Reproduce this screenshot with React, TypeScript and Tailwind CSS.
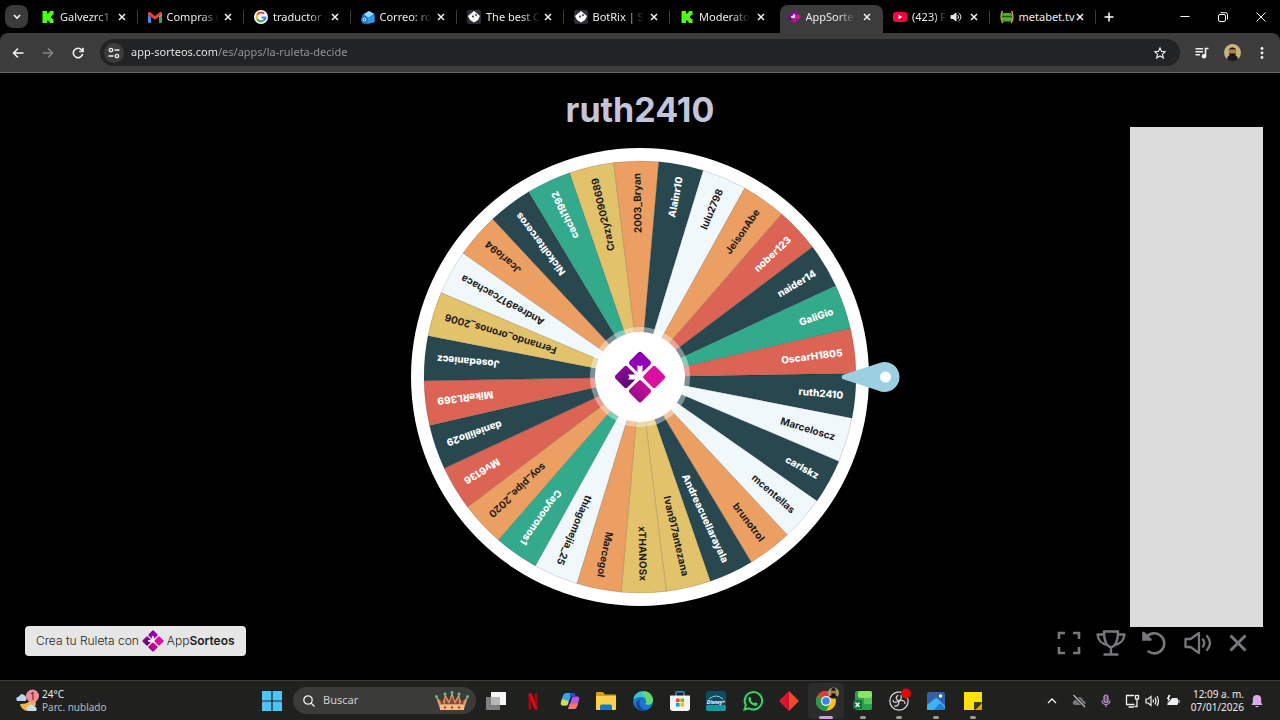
import { useId, type ReactNode } from "react"
import { clsx } from "clsx"

const TEAL = "#28474f"
const GREEN = "#34aa8d"
const SAND = "#e3c26c"
const ORANGE = "#ec9f63"
const CORAL = "#dc6454"
const ICE = "#f0f8fc"

const entries = [
  { name: "ruth2410", color: TEAL },
  { name: "Marceloscz", color: ICE },
  { name: "carlskz", color: TEAL },
  { name: "mcentellas", color: ICE },
  { name: "brunotrol", color: ORANGE },
  { name: "Andreacuellarayala", color: TEAL },
  { name: "Ivan917antezana", color: SAND },
  { name: "xTHANOSx", color: SAND },
  { name: "Marcegol", color: ORANGE },
  { name: "thiagomejia_25", color: ICE },
  { name: "Cayooronos1", color: GREEN },
  { name: "soy_pipe_2020", color: ORANGE },
  { name: "Mv6136", color: CORAL },
  { name: "danielillo29", color: TEAL },
  { name: "MikeRL369", color: CORAL },
  { name: "Josedaniecz", color: TEAL },
  { name: "Fernando_oronos_2006", color: SAND },
  { name: "Andrea917cachaca", color: ICE },
  { name: "Jcarlo94", color: ORANGE },
  { name: "Nickollterceros", color: TEAL },
  { name: "cachi1992", color: GREEN },
  { name: "Crazy2090689", color: SAND },
  { name: "2003_Bryan", color: ORANGE },
  { name: "Alainr10", color: TEAL },
  { name: "lulu2798", color: ICE },
  { name: "JeisonAbe", color: ORANGE },
  { name: "nober123", color: CORAL },
  { name: "naider14", color: TEAL },
  { name: "GaliGio", color: GREEN },
  { name: "OscarH1805", color: CORAL },
]

const START = -1
const STEP = 360 / entries.length
const RADIUS = 216

function slicePath(index: number) {
  const point = (deg: number) => {
    const rad = (deg * Math.PI) / 180
    return `${(RADIUS * Math.cos(rad)).toFixed(2)} ${(RADIUS * Math.sin(rad)).toFixed(2)}`
  }
  const from = START + index * STEP
  return `M0 0L${point(from)}A${RADIUS} ${RADIUS} 0 0 1 ${point(from + STEP)}Z`
}

function LogoShape() {
  const id = useId()
  return (
    <g>
      <defs>
        <linearGradient id={`${id}t`} x1="0" y1="0" x2="1" y2="1">
          <stop offset="0" stopColor="#7c00a8" />
          <stop offset="1" stopColor="#ac00c8" />
        </linearGradient>
        <linearGradient id={`${id}l`} x1="0" y1="0" x2="1" y2="0">
          <stop offset="0" stopColor="#8a0a96" />
          <stop offset="1" stopColor="#560a6c" />
        </linearGradient>
        <linearGradient id={`${id}b`} x1="0" y1="0" x2="0" y2="1">
          <stop offset="0" stopColor="#c4109c" />
          <stop offset="1" stopColor="#9c0a8a" />
        </linearGradient>
      </defs>
      <g transform="rotate(45)">
        <rect x="-18.500" y="-18.500" width="17" height="17" rx="2.500" fill={`url(#${id}t)`} />
        <rect x="-18.500" y="1.500" width="17" height="17" rx="2.500" fill={`url(#${id}l)`} />
        <rect x="1.500" y="-18.500" width="17" height="17" rx="2.500" fill="#dc10a0" />
        <rect x="1.500" y="1.500" width="17" height="17" rx="2.500" fill={`url(#${id}b)`} />
      </g>
      <path d="M-2.500-12L0-10.500L2.500-12V-2H-2.500ZM-12-2.500L-10.500 0L-12 2.500H-2V-2.500Z" fill="#fff" />
      <path d="M-5-5L5 5M5-5L-5 5" stroke="#fff" strokeWidth="3" />
    </g>
  )
}

function Logo({ className }: { className: string }) {
  return (
    <svg viewBox="-26 -26 52 52" className={className} aria-hidden="true">
      <LogoShape />
    </svg>
  )
}

function Wheel() {
  return (
    <svg viewBox="-229 -229 458 458" className="size-[458px] overflow-visible">
      <circle r="229" fill="#fff" />
      {entries.map((entry, i) => (
        <path key={entry.name} d={slicePath(i)} fill={entry.color} stroke="#00000055" strokeWidth="0.4" />
      ))}
      {entries.map((entry, i) => {
        const light = entry.color === TEAL || entry.color === GREEN || entry.color === CORAL
        return (
          <text
            key={entry.name}
            transform={`rotate(${START + (i + 0.5) * STEP})`}
            x="204"
            y="4"
            textAnchor="end"
            className={clsx("text-[10px]", light ? "fill-white font-extrabold" : "fill-[#1c1c1c] font-bold")}
          >
            {entry.name}
          </text>
        )
      })}
      <circle r="50" fill="#fff" fillOpacity="0.4" />
      <circle r="45" fill="#fff" />
      <LogoShape />
      <path d="M202 0C201-1.500 203-2 204-2.500L238-13.500A15 15 0 1 1 238 13.500L204 2.500C203 2 201 1.500 202 0Z" fill="#9ccfe2" />
      <circle cx="245.500" r="5.500" fill="#fff" />
    </svg>
  )
}

function KickIcon() {
  return (
    <svg viewBox="0 0 12 12" className="ml-px size-3 shrink-0">
      <path d="M0.500 0H5V2.500H6.500V1.200H7.800V0H11.500V4H10V5H9V7H10V8H11.500V12H7.800V10.800H6.500V9.500H5V12H0.500Z" fill="#4dfa18" />
    </svg>
  )
}

function GmailIcon() {
  return (
    <svg viewBox="0 0 14 11" className="h-[11px] w-3.5 shrink-0">
      <path d="M0 2V10a1 1 0 0 0 1 1H3V4Z" fill="#4285f4" />
      <path d="M14 2V10a1 1 0 0 1-1 1H11V4Z" fill="#34a853" />
      <path d="M0 1.500V3L3 5.500V2Z" fill="#c5221f" />
      <path d="M14 1.500V3L11 5.500V2Z" fill="#fbbc04" />
      <path d="M0 2C0 0 1.500-0.300 2.500 0.500L7 4L11.500 0.500C12.500-0.300 14 0 14 2L11 4.800L7 7.800L3 4.800Z" fill="#ea4335" />
    </svg>
  )
}

function GoogleIcon() {
  return (
    <svg viewBox="-8 -8 16 16" className="size-3.5 shrink-0">
      <circle r="8" fill="#fff" />
      <g fill="none" strokeWidth="2.400">
        <path d="M3.600-3.600A5 5 0 0 0-4.300-2.600" stroke="#ea4335" />
        <path d="M-4.300-2.600A5 5 0 0 0-4.300 2.600" stroke="#fbbc04" />
        <path d="M-4.300 2.600A5 5 0 0 0 3 4" stroke="#34a853" />
        <path d="M3 4A5 5 0 0 0 5 0.500H0.500" stroke="#4285f4" />
      </g>
    </svg>
  )
}

function MailIcon() {
  return (
    <svg viewBox="0 0 14 14" className="size-3.5 shrink-0">
      <path d="M1 5L8 1L13.500 4V12L8 13.500H1Z" fill="#1272d0" />
      <path d="M3 4L8 1L13 4L7 8Z" fill="#8fdcff" />
      <path d="M7 8L13.500 5V12L8 13.500H3Z" fill="#2f9bf0" />
      <circle cx="3.500" cy="9.500" r="3.500" fill="#1b6fcf" />
      <circle cx="3.500" cy="9.500" r="1.500" fill="none" stroke="#fff" />
    </svg>
  )
}

function BotrixIcon() {
  return (
    <svg viewBox="0 0 14 14" className="size-3.5 shrink-0">
      <rect width="14" height="14" rx="2" fill="#2c2d38" />
      <path d="M7 1L13 6L11 10L7 12.500L3 10L1 6Z" fill="#fff" />
      <path d="M5 6.500L6 5L7 6.500L6 8ZM8 5L9 3.800L10 5L9 6.500Z" fill="#222" />
    </svg>
  )
}

function YoutubeIcon() {
  return (
    <svg viewBox="0 0 14 10" className="h-2.5 w-3.5 shrink-0">
      <rect width="14" height="10" rx="2.500" fill="#f4023c" />
      <path d="M5.500 2.800L9.200 5L5.500 7.200Z" fill="#fff" />
    </svg>
  )
}

function MetabetIcon() {
  return (
    <svg viewBox="0 0 14 14" className="size-3.5 shrink-0">
      <path d="M2.500 1C0.500 4 0.500 10 3 13M11.500 1C13.500 4 13.500 10 11 13" stroke="#c9a13c" strokeWidth="1.500" fill="none" />
      <rect x="2" y="3" width="10" height="8.500" rx="2" fill="#58ac30" />
      <path d="M2 6.500H12" stroke="#1d5a12" strokeWidth="1.500" />
    </svg>
  )
}

function CloseGlyph({ className = "size-2" }: { className?: string }) {
  return (
    <svg viewBox="0 0 8 8" className={className}>
      <path d="M1 1L7 7M7 1L1 7" stroke="currentColor" strokeWidth="1.500" />
    </svg>
  )
}

const tabs: { title: string; icon: ReactNode; active?: boolean; audio?: boolean }[] = [
  { title: "Galvezrc1 :", icon: <KickIcon /> },
  { title: "Compras (", icon: <GmailIcon /> },
  { title: "traductor i", icon: <GoogleIcon /> },
  { title: "Correo: ro", icon: <MailIcon /> },
  { title: "The best C", icon: <BotrixIcon /> },
  { title: "BotRix | S", icon: <BotrixIcon /> },
  { title: "Moderato", icon: <KickIcon /> },
  { title: "AppSorte", icon: <Logo className="size-3.5 shrink-0" />, active: true },
  { title: "(423) F", icon: <YoutubeIcon />, audio: true },
  { title: "metabet.tv", icon: <MetabetIcon /> },
]

function TabStrip() {
  return (
    <div className="flex h-[33px] items-stretch bg-black">
      <div className="flex w-[31px] items-center pl-[5px]">
        <button aria-label="Buscar pestañas" className="flex size-[23px] items-center justify-center rounded-lg bg-[#3a3a3a]">
          <svg viewBox="0 0 8 6" className="h-1.5 w-2">
            <path d="M1 1L4 4.200L7 1" stroke="#fff" strokeWidth="1.600" fill="none" />
          </svg>
        </button>
      </div>
      <div className="flex min-w-0 flex-1">
        {tabs.map((tab, i) => (
          <div key={i} className="relative flex min-w-0 flex-1 items-end">
            <div
              className={clsx(
                "flex h-7 min-w-0 flex-1 items-center pr-3 pb-1 pl-2.5",
                tab.active && "ml-[3px] rounded-t-lg bg-[#3c3c3c] pl-[7px]",
              )}
            >
              <button className="flex min-w-0 flex-1 items-center text-left">
                <span className="flex w-[19px] shrink-0">{tab.icon}</span>
                <span
                  className={clsx(
                    "flex-1 text-[11px] leading-4 whitespace-nowrap text-[#ececec]",
                    i < 9 && "[mask-image:linear-gradient(to_right,black_65%,transparent)]",
                  )}
                >
                  {tab.title}
                </span>
                {tab.audio && (
                  <svg viewBox="0 0 12 12" className="mx-1 size-3 shrink-0" fill="none" stroke="#e6e6e6">
                    <path d="M1 4.500H3L6 2V10L3 7.500H1Z" fill="#e6e6e6" />
                    <path d="M7.500 4A2.500 2.500 0 0 1 7.500 8M8.500 2A4.500 4.500 0 0 1 8.500 10" />
                  </svg>
                )}
              </button>
              <button aria-label="Cerrar pestaña" className={clsx("text-[#f2f2f2]", i < 9 ? "ml-2" : "ml-1")}>
                <CloseGlyph />
              </button>
            </div>
            {!tab.active && i !== 6 && <span className="absolute top-2.5 right-0 h-3.5 w-px bg-[#3a3a3a]" />}
          </div>
        ))}
      </div>
      <button aria-label="Nueva pestaña" className="flex w-[26px] items-center justify-center text-white">
        <svg viewBox="0 0 10 10" className="size-2.5">
          <path d="M5 0.500V9.500M0.500 5H9.500" stroke="currentColor" strokeWidth="1.500" />
        </svg>
      </button>
      <div className="ml-11 flex items-stretch text-white">
        <button aria-label="Minimizar" className="flex w-[38px] items-center justify-center">
          <svg viewBox="0 0 10 10" className="size-2.5">
            <path d="M0.500 4.500H9.500" stroke="currentColor" />
          </svg>
        </button>
        <button aria-label="Restaurar" className="flex w-[38px] items-center justify-center">
          <svg viewBox="0 0 10 10" className="size-2.5" fill="none" stroke="currentColor">
            <rect x="0.500" y="2.500" width="7" height="7" rx="1.500" />
            <path d="M2.500 0.700H7.500A2 2 0 0 1 9.500 2.700V7.500" />
          </svg>
        </button>
        <button aria-label="Cerrar" className="flex w-[38px] items-center justify-center">
          <svg viewBox="0 0 10 10" className="size-2.5">
            <path d="M0.500 0.500L9.500 9.500M9.500 0.500L0.500 9.500" stroke="currentColor" />
          </svg>
        </button>
      </div>
    </div>
  )
}

function Avatar({ className }: { className: string }) {
  return (
    <svg viewBox="0 0 16 16" className={className}>
      <circle cx="8" cy="8" r="8" fill="#c5b578" />
      <path d="M3 14.500C3 11 5 10 8 10S13 11 13 14.500A8 8 0 0 1 3 14.500Z" fill="#1e1a1c" />
      <ellipse cx="8" cy="7.500" rx="3.200" ry="4" fill="#b07a55" />
      <path d="M4.500 7C4 2 12 2 11.500 7L10.500 5H5.500ZM4.800 8.500L6 9H10L11.200 8.500C11 13 5 13 4.800 8.500Z" fill="#17110e" />
    </svg>
  )
}

function AddressBar() {
  return (
    <div className="flex h-10 items-center rounded-t-lg border-b border-[#6a6a6a] bg-[#3c3c3c] text-[#e8e8e8]">
      <div className="flex w-[100px] items-center pl-[3px]">
        <button aria-label="Atrás" className="flex w-[30px] justify-center">
          <svg viewBox="0 0 12 12" className="size-3" fill="none" stroke="#f4f4f4" strokeWidth="1.500">
            <path d="M11.500 6H1.500M6 1.500L1.500 6L6 10.500" />
          </svg>
        </button>
        <button aria-label="Adelante" className="flex w-[30px] justify-center">
          <svg viewBox="0 0 12 12" className="size-3" fill="none" stroke="#858585" strokeWidth="1.500">
            <path d="M0.500 6H10.500M6 1.500L10.500 6L6 10.500" />
          </svg>
        </button>
        <button aria-label="Recargar" className="flex w-[30px] justify-center">
          <svg viewBox="0 0 12 12" className="size-3" fill="none" stroke="#f4f4f4" strokeWidth="1.600">
            <path d="M10.600 7A4.700 4.700 0 1 1 9.500 2.800L10.800 4.200M11 0.800V4.500H7.200" />
          </svg>
        </button>
      </div>
      <div className="flex h-[27px] flex-1 items-center rounded-full bg-[#212325] pr-3.5 pl-1">
        <button aria-label="Información del sitio" className="flex size-5 items-center justify-center rounded-full bg-[#3c3c3c]">
          <svg viewBox="0 0 12 12" className="size-3" fill="none" stroke="#f0f0f0" strokeWidth="1.300">
            <circle cx="3" cy="3" r="1.700" />
            <circle cx="9" cy="9" r="1.700" />
            <path d="M6.500 3H11.500M0.500 9H5.500" />
          </svg>
        </button>
        <input
          aria-label="Dirección"
          defaultValue="app-sorteos.com/es/apps/la-ruleta-decide"
          className="ml-[7px] min-w-0 flex-1 bg-[linear-gradient(to_right,#f4f4f4_86px,#96989a_86px)] bg-clip-text text-[11px] text-transparent outline-none"
        />
        <button aria-label="Añadir a marcadores">
          <svg viewBox="0 0 14 14" className="size-3" fill="none" stroke="#f0f0f0" strokeWidth="1.300">
            <path d="M7 1L8.800 5.100L13.200 5.500L9.900 8.400L10.900 12.800L7 10.500L3.100 12.800L4.100 8.400L0.800 5.500L5.200 5.100Z" />
          </svg>
        </button>
      </div>
      <div className="flex w-[100px] items-center pl-[7px]">
        <button aria-label="Controles multimedia" className="flex w-[30px] justify-center">
          <svg viewBox="0 0 14 12" className="h-3 w-3.5" fill="none" stroke="#f0f0f0" strokeWidth="1.600">
            <path d="M0.500 1.800H8M0.500 4.800H8M0.500 7.800H5M10.500 9.300V1.500H13.500" />
            <circle cx="9" cy="9.300" r="1.500" fill="#f0f0f0" />
          </svg>
        </button>
        <button aria-label="Perfil" className="flex w-[30px] justify-center">
          <Avatar className="size-[17px]" />
        </button>
        <button aria-label="Menú" className="flex w-[30px] justify-center">
          <svg viewBox="0 0 4 14" className="h-3.5 w-1" fill="#f0f0f0">
            <circle cx="2" cy="2.500" r="1.400" />
            <circle cx="2" cy="7" r="1.400" />
            <circle cx="2" cy="11.500" r="1.400" />
          </svg>
        </button>
      </div>
    </div>
  )
}

function WheelControls() {
  return (
    <div className="flex h-[53px] items-start pt-0.5 pr-[7px] text-[#77787c] [&_svg]:fill-none [&_svg]:stroke-current">
      <button aria-label="Pantalla completa" className="flex h-7 w-[42px] items-center justify-center">
        <svg viewBox="0 0 24 24" className="size-6" strokeWidth="2.600">
          <path d="M2 8V2H8M16 2H22V8M22 16V22H16M8 22H2V16" />
        </svg>
      </button>
      <button aria-label="Ganadores" className="flex h-7 w-[42px] items-center justify-center">
        <svg viewBox="0 0 30 26" className="h-[26px] w-[30px]" strokeWidth="2.400">
          <path d="M8 1.500H22C22 10 19.500 16 15 17.500C10.500 16 8 10 8 1.500ZM8 4.500H1.500C2 10 6 14 11.500 15M22 4.500H28.500C28 10 24 14 18.500 15M15 17.500V24.500M8.500 24.500H21.500" strokeLinejoin="round" strokeLinecap="round" />
        </svg>
      </button>
      <button aria-label="Reiniciar" className="flex h-7 w-11 items-center justify-center">
        <svg viewBox="0 0 24 24" className="size-6" strokeWidth="2.600">
          <path d="M1.500 2V8.500H8.500M2 8L4 5.500M4.500 6A10 10 0 1 1 6.500 20.500M1.500 2L8 8.500" strokeLinecap="round" />
        </svg>
      </button>
      <button aria-label="Sonido" className="flex h-7 w-11 items-center justify-center">
        <svg viewBox="0 0 28 24" className="h-6 w-7" strokeWidth="2.300" strokeLinejoin="round" strokeLinecap="round">
          <path d="M1.500 8H6.500L15 2V22L6.500 16H1.500ZM19 8.500Q21.500 12 19 15.500M23 5Q29 12 23 19" />
        </svg>
      </button>
      <button aria-label="Salir" className="flex h-7 w-9 items-center justify-center">
        <svg viewBox="0 0 18 18" className="size-[18px]" strokeWidth="3">
          <path d="M1.500 1.500L16.500 16.500M16.500 1.500L1.500 16.500" />
        </svg>
      </button>
    </div>
  )
}

const apps: { label: string; icon: ReactNode; running?: boolean }[] = [
  {
    label: "Vista de tareas",
    icon: (
      <>
        <rect x="5" y="1" width="15" height="13" fill="#f6f6f6" />
        <rect x="0" y="6" width="14" height="13" fill="#8a8a8a" fillOpacity="0.9" />
        <rect x="5" y="6" width="9" height="8" fill="#b8b8b8" />
      </>
    ),
  },
  {
    label: "Netflix",
    icon: (
      <>
        <path d="M5.500 2.500H8.500V18L5.500 18.400ZM11.500 2.500H14.500V18.400L11.500 18Z" fill="#a80710" />
        <path d="M5.500 2.500H8.500L14.500 18.400L11.500 18Z" fill="#e50914" />
      </>
    ),
  },
  {
    label: "Copilot",
    icon: (
      <>
        <path d="M6 2H12L8 13Q7.500 14.500 5.500 14.500H3Q0 14.500 1 11L3 4.500Q4 2 6 2Z" fill="#35a6e8" />
        <path d="M1 11L2 8L8.500 10L8 13Q7.500 14.500 5.500 14.500H3Q0 14.500 1 11Z" fill="#d9d94a" />
        <path d="M14 18H8L12 7Q12.500 5.500 14.500 5.500H17Q20 5.500 19 9L17 15.500Q16 18 14 18Z" fill="#b65ae0" />
        <path d="M14 18H8L10 12.500H18L17 15.500Q16 18 14 18Z" fill="#f4756b" />
        <path d="M10 2H13.500Q15 2 15.500 4L16 5.500H12.500Q11 5.500 10 8Z" fill="#1c56d0" />
      </>
    ),
  },
  {
    label: "Explorador",
    icon: (
      <>
        <path d="M0 2Q0 1 1 1H7L9 3.500H19Q20 3.500 20 4.500V10H0Z" fill="#d99c14" />
        <rect y="5" width="20" height="14" rx="1" fill="#fbd04b" />
        <path d="M4 19V15Q4 13.500 5.500 13.500H14.500Q16 13.500 16 15V19Z" fill="#1976c8" />
      </>
    ),
  },
  {
    label: "Edge",
    icon: (
      <>
        <circle cx="10" cy="10" r="10" fill="#1a76cc" />
        <path d="M0.500 9C1-2 18-3 20 9C20.500 13 15 15 12.500 13C14 11 13 6 8.500 6C4 6 1 8 0.500 9Z" fill="#3fc0d0" />
        <path d="M12 0.300C17 1 20 5 20 9C20 13 15 15 12.500 13C15 9 12 4 8 3Z" fill="#66d66a" />
        <path d="M7 9C5 13 8 19 14 18.500Q10 21 5.500 18.500C1 14 3 9 8.500 8Z" fill="#124a98" />
      </>
    ),
  },
  {
    label: "Microsoft Store",
    icon: (
      <>
        <path d="M6 5V1.500Q6 0.700 7 0.700H13Q14 0.700 14 1.500V5" fill="none" stroke="#2a93d8" strokeWidth="1.500" />
        <path d="M0 4.500H20V17Q20 20 17 20H3Q0 20 0 17Z" fill="#f4f4f4" />
        <rect x="6" y="7.500" width="3.600" height="3.600" fill="#f25022" />
        <rect x="10.500" y="7.500" width="3.600" height="3.600" fill="#7fba00" />
        <rect x="6" y="12" width="3.600" height="3.600" fill="#00a4ef" />
        <rect x="10.500" y="12" width="3.600" height="3.600" fill="#ffb900" />
      </>
    ),
  },
  {
    label: "Disney+",
    icon: (
      <>
        <rect width="20" height="20" rx="2" fill="#0b4c62" />
        <rect y="14" width="20" height="6" rx="2" fill="#149a9e" />
        <path d="M3 8Q10 2 17 8" stroke="#bfeaf0" strokeWidth="0.800" fill="none" />
        <text x="10" y="13" textAnchor="middle" className="fill-white text-[5px] font-bold italic">
          Disney+
        </text>
      </>
    ),
  },
  {
    label: "WhatsApp",
    icon: (
      <>
        <path d="M1.500 18.500L2.800 14A8.700 8.700 0 1 1 6 17.300Z" fill="none" stroke="#35d466" strokeWidth="2" />
        <path d="M7 5.500L8.500 8.300L7.800 9.500Q9 11.500 11 12.300L12.200 11.300L14.800 12.600Q14.500 15 12.300 14.900Q6.500 14 5.300 8.300Q5.300 6 7 5.500Z" fill="#35d466" />
      </>
    ),
  },
  {
    label: "Rombo",
    icon: (
      <>
        <path d="M10 0L0 10L10 20Z" fill="#e8142c" />
        <path d="M10 0L20 10L10 20Z" fill="#f0482a" />
        <path d="M10 0L5 10L10 20Z" fill="#d01230" />
      </>
    ),
  },
  {
    label: "Chrome",
    running: true,
    icon: (
      <>
        <circle cx="10" cy="10" r="10" fill="#fbc116" />
        <path d="M10 10L1.300 5A10 10 0 0 1 18.700 5Z" fill="#e33b2e" />
        <path d="M10 10L1.300 5A10 10 0 0 0 10 20L14.300 12.500Z" fill="#229a48" />
        <circle cx="10" cy="10" r="5" fill="#fff" />
        <circle cx="10" cy="10" r="3.800" fill="#3b82ec" />
        <circle cx="17.500" cy="2" r="5.500" fill="#a89a72" />
        <path d="M13.500 6Q14 4 17.500 4T21.500 6Q17.500 9 13.500 6Z" fill="#1e1a1c" />
        <ellipse cx="17.500" cy="1.500" rx="2.300" ry="3" fill="#a8754f" />
        <path d="M15 1Q15-3 17.500-3T20 1L19.500-0.500H15.500ZM15.200 2.500H19.800Q19.500 5.500 17.500 5.500T15.200 2.500Z" fill="#17110e" />
      </>
    ),
  },
  {
    label: "Excel",
    running: true,
    icon: (
      <>
        <rect x="2" width="17" height="19" rx="2" fill="#2ba04c" />
        <rect x="5" width="14" height="7" rx="2" fill="#8be26a" />
        <rect x="11" y="7" width="8" height="6" fill="#52c45a" />
        <rect y="9" width="9" height="9" rx="1.500" fill="#0f703b" />
        <path d="M2.500 11.500L6.500 16M6.500 11.500L2.500 16" stroke="#fff" strokeWidth="1.300" />
      </>
    ),
  },
  {
    label: "OBS Studio",
    running: true,
    icon: (
      <>
        <circle cx="10" cy="10" r="9.200" fill="#242426" stroke="#d8d8d8" strokeWidth="1.200" />
        <path d="M9 4Q5 8 10 10Q16 8 16 13M10 10Q10 16 5 15M4 9Q4 13 10 10M12 4Q13 8 10 10" fill="none" stroke="#d8d8d8" strokeWidth="1.200" />
        <circle cx="17" cy="2.500" r="5" fill="#e00808" />
      </>
    ),
  },
  {
    label: "Fotos",
    running: true,
    icon: (
      <>
        <rect x="1" y="1" width="18" height="18" rx="2" fill="#3360a8" />
        <path d="M1 14L9 7.500Q10.500 6.500 12 8L19 15V17Q19 19 17 19H1Z" fill="#3fb4ec" />
        <path d="M8 19L13 13Q14 12 15.500 13.500L19 17Q19 19 17 19Z" fill="#1c82d0" />
        <circle cx="14.500" cy="5" r="1.700" fill="#fff" />
      </>
    ),
  },
  {
    label: "Notas rápidas",
    running: true,
    icon: (
      <>
        <path d="M1 1H19V12H12V19H1Z" fill="#fbe00a" />
        <path d="M11 11H19L11 19Z" fill="#3d3b28" />
        <path d="M19 12V19H12Z" fill="#d8a708" />
      </>
    ),
  },
]

function Taskbar() {
  return (
    <div className="flex h-10 items-center border-t border-[#3d3d3d] bg-[#20201f] text-[#ececec]">
      <button className="flex w-[251px] items-center pl-4 text-left">
        <svg viewBox="0 0 23 24" className="h-6 w-[23px]">
          <path d="M4 15A8 8 0 1 0 13 6Q17 15 4 15Z" fill="#efb350" />
          <path d="M1 12Q-1 8 3 7.500Q5 3 9 6.500Q12 9 9.500 12Z" fill="#bcd4f4" />
          <path d="M12 22Q9 19 12 17.500Q15 14 18.500 17.500Q22 18.500 20 22Z" fill="#c7dcf6" />
          <circle cx="16.500" cy="7" r="6.500" fill="#f08c9c" />
          <text x="16.500" y="10.500" textAnchor="middle" className="fill-[#301418] text-[10px]">
            1
          </text>
        </svg>
        <span className="ml-[3px] text-[10px] leading-[13px]">
          24°C
          <span className="block text-[#bcbcbc]">Parc. nublado</span>
        </span>
      </button>
      <button aria-label="Inicio" className="flex w-[42px] justify-center">
        <svg viewBox="0 0 20 20" className="size-5" fill="#4cc4f4">
          <path d="M0 0H9.400V9.400H0ZM10.600 0H20V9.400H10.600ZM0 10.600H9.400V20H0ZM10.600 10.600H20V20H10.600Z" />
        </svg>
      </button>
      <label className="flex h-[27px] w-[183px] items-center rounded-full bg-[#3b3b3a] pr-[7px] pl-2.5">
        <svg viewBox="0 0 12 12" className="size-3 shrink-0" fill="none" stroke="#f0f0f0" strokeWidth="1.300">
          <circle cx="5" cy="5" r="4.200" />
          <path d="M8 8L11.500 11.500" />
        </svg>
        <input placeholder="Buscar" aria-label="Buscar" className="ml-2 min-w-0 flex-1 bg-transparent text-[11px] outline-none placeholder:text-[#cfcfcf]" />
        <svg viewBox="0 0 34 20" className="h-5 w-[34px] shrink-0">
          <path d="M5 18L1 6L8 11L10 3L14 10L17 1L20 10L24 3L26 11L33 6L29 18Z" fill="#e0986a" />
          <path d="M6 13L4 8L10 13L10 6L14 13L17 5L20 13L24 6L24 13L30 8L28 13Z" fill="#8a4a34" />
          <path d="M5 14H29V19H5Z" fill="#f2c088" />
          <g fill="#52c898">
            <circle cx="1.500" cy="5.500" r="1.500" />
            <circle cx="10" cy="3" r="1.500" />
            <circle cx="17" cy="1.500" r="1.500" />
            <circle cx="24" cy="3" r="1.500" />
            <circle cx="32.500" cy="5.500" r="1.500" />
          </g>
          <g fill="#b03848">
            <circle cx="10" cy="16.500" r="1.200" />
            <circle cx="17" cy="16.500" r="1.200" />
            <circle cx="24" cy="16.500" r="1.200" />
          </g>
        </svg>
      </label>
      <div className="flex h-full w-[515px] items-center pl-0.5">
        {apps.map((app) => {
          const isChrome = app.label === "Chrome"
          return (
            <button
              key={app.label}
              aria-label={app.label}
              className={clsx("relative flex h-9 flex-1 items-center justify-center rounded", isChrome && "bg-[#2d2c2c]")}
            >
              <svg viewBox="0 0 20 20" className="size-5 overflow-visible">
                {app.icon}
              </svg>
              {app.running && (
                <span
                  className={clsx(
                    "absolute bottom-0 left-1/2 h-[3px] -translate-x-1/2 rounded-full",
                    isChrome ? "w-3.5 bg-[#c8a0dc]" : "w-1.5 bg-[#9a9a9a]",
                  )}
                />
              )}
            </button>
          )
        })}
      </div>
      <div className="ml-auto flex items-center pr-[17px] [&_svg]:overflow-visible">
        <button aria-label="Iconos ocultos" className="flex w-[27px] justify-center">
          <svg viewBox="0 0 10 6" className="h-1.5 w-2.5" fill="none" stroke="#f0f0f0" strokeWidth="1.300">
            <path d="M1 5L5 1L9 5" />
          </svg>
        </button>
        <button aria-label="OneDrive" className="flex w-[27px] justify-center">
          <svg viewBox="0 0 14 12" className="h-3 w-3.5">
            <path d="M3 10Q0 9.500 1 6.500Q2 5 3.500 5Q5 1 9 2.500Q11 4 11 5.500Q14 6 13.500 8.500Q13 10 11 10Z" fill="#77787a" />
            <path d="M1.500 0L13 12" stroke="#20201f" strokeWidth="3" />
            <path d="M1.500 0L13 12" stroke="#c4c4c4" strokeWidth="1.100" />
          </svg>
        </button>
        <button aria-label="Micrófono" className="flex w-[26px] justify-center">
          <svg viewBox="0 0 10 14" className="h-3.5 w-2.5" fill="none" stroke="#c696d4" strokeWidth="1.200">
            <rect x="3" y="1" width="4" height="7.500" rx="2" fill="#6a4a74" />
            <path d="M1 6.500A4 4 0 0 0 9 6.500M5 10.500V13" />
          </svg>
        </button>
        <button aria-label="Red, volumen y batería" className="ml-1.5 flex items-center gap-1.5">
          <svg viewBox="0 0 14 14" className="size-3.5" fill="none" stroke="#f0f0f0" strokeWidth="1.300">
            <path d="M9 1.500H1.500V10.500H9.500M3.500 13H9" />
            <rect x="10.500" y="1.500" width="3" height="3.500" />
            <path d="M12 5V12.500H9.500" />
          </svg>
          <svg viewBox="0 0 14 14" className="size-3.5" fill="none" stroke="#f0f0f0" strokeWidth="1.200">
            <path d="M1 5H3L6 2.500V11.500L3 9H1ZM8 5.500Q9 7 8 8.500M10 3.500Q12 7 10 10.500M12 2Q15 7 12 12" />
          </svg>
          <svg viewBox="0 0 14 14" className="size-3.5">
            <rect x="2" y="4" width="11" height="7" rx="1.500" fill="#f0f0f0" />
            <path d="M13.500 6H14.500V9H13.500Z" fill="#f0f0f0" />
            <path d="M3.500 0L1 5.500H3L1.500 10L6.500 4.500H4.500L6 1Z" fill="#f0f0f0" stroke="#20201f" />
          </svg>
        </button>
        <button className="ml-3 text-right text-[10px] leading-[13px]">
          <span className="block">12:09 a. m.</span>
          <span className="block">07/01/2026</span>
        </button>
        <button aria-label="Notificaciones" className="ml-[7px]">
          <svg viewBox="0 0 12 14" className="h-3.5 w-3" fill="#dcaaec">
            <path d="M0.500 11L1.800 8.500V5Q2 1 6 1T10.200 5V8.500L11.500 11ZM4 12H8Q6 14.500 4 12Z" />
          </svg>
        </button>
      </div>
    </div>
  )
}

export default function App() {
  return (
    <div className="flex min-h-screen flex-col bg-black font-['Noto_Sans',sans-serif]">
      <TabStrip />
      <AddressBar />
      <main className="grid flex-1 grid-cols-[1fr_auto_1fr] font-[Inter,sans-serif]">
        <div className="flex items-end pb-6 pl-[25px]">
          <a href="#" className="flex h-[30px] items-center rounded bg-[#e6e6e6] px-[11px] text-xs font-light text-[#1c1c1c]">
            Crea tu Ruleta con
            <Logo className="mx-[3px] size-[22px]" />
            <span>
              App<span className="font-semibold">Sorteos</span>
            </span>
          </a>
        </div>
        <div className="flex flex-col items-center gap-[18px] pt-[17px]">
          <h1 className="text-[34px] leading-10 font-bold text-[#c3c5da]">ruth2410</h1>
          <Wheel />
        </div>
        <div className="flex flex-col items-end pt-[54px] pr-[17px]">
          <div className="w-[133px] flex-1 bg-[#dcdcdc]" />
          <WheelControls />
        </div>
      </main>
      <Taskbar />
    </div>
  )
}
